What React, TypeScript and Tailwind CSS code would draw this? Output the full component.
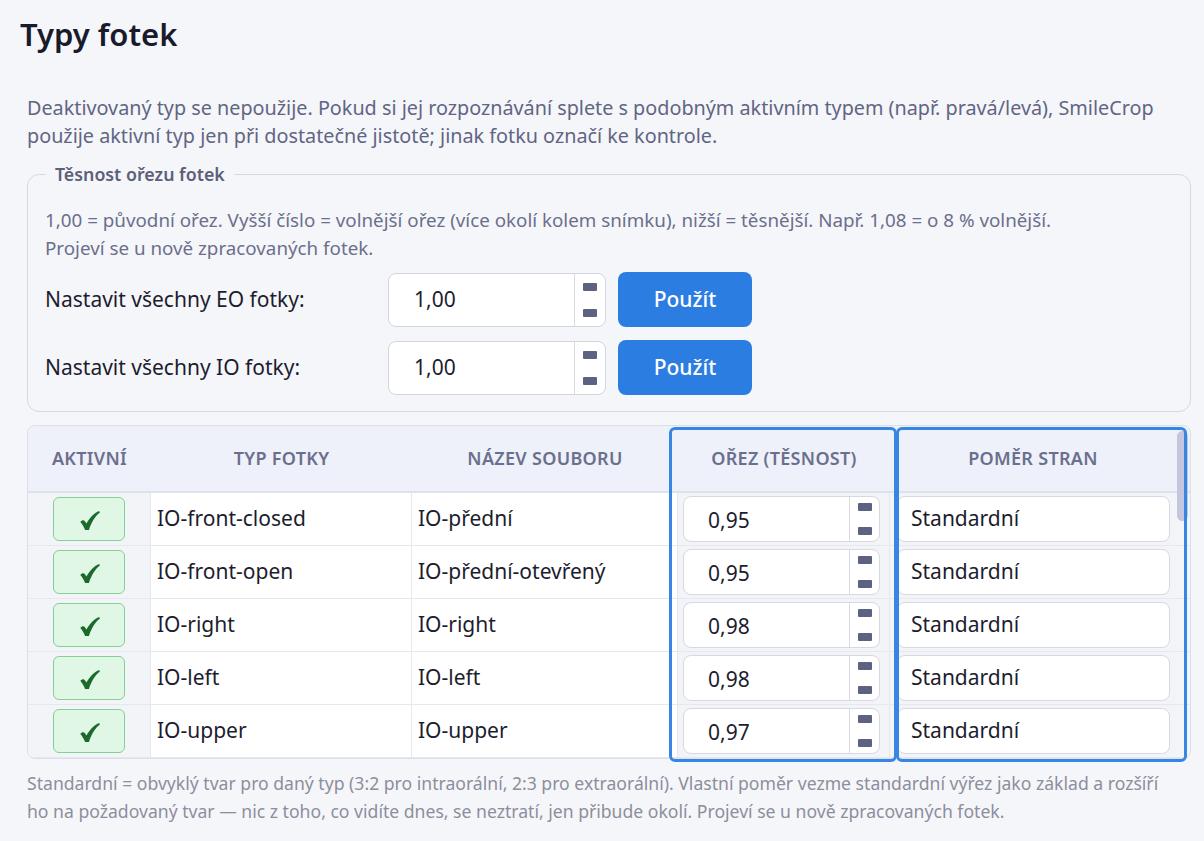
import React from "react";

const FONT = { fontFamily: '"Segoe UI", "Noto Sans", "Open Sans", sans-serif' };

interface PhotoType {
  code: string;
  fileName: string;
  crop: string;
}

const photoTypes: PhotoType[] = [
  { code: "IO-front-closed", fileName: "IO-přední", crop: "0,95" },
  { code: "IO-front-open", fileName: "IO-přední-otevřený", crop: "0,95" },
  { code: "IO-right", fileName: "IO-right", crop: "0,98" },
  { code: "IO-left", fileName: "IO-left", crop: "0,98" },
  { code: "IO-upper", fileName: "IO-upper", crop: "0,97" },
];

function CheckMark() {
  return (
    <svg width="20" height="19" viewBox="0 0 20 19" className="mt-[3px] ml-[2px]">
      <path
        d="M0.3 10.9 C1.8 9 3.8 8.6 4.9 10.2 L6.5 12.6 C9.4 7.4 13.2 2.8 19.1 0.1 L19.9 1.5 C14.8 5.6 11.6 11 8.9 18.9 L5.1 18.9 C3.7 15.4 2.1 12.9 0.3 10.9 Z"
        fill="#1b6a2c"
      />
    </svg>
  );
}

function Spinner({ className }: { className?: string }) {
  return (
    <div
      className={`flex flex-col items-center justify-between border-l border-[#d8dae5] ${className ?? ""}`}
    >
      <span className="block h-[8px] w-[14px] rounded-[1px] bg-[#5d6282]" />
      <span className="block h-[8px] w-[14px] rounded-[1px] bg-[#5d6282]" />
    </div>
  );
}

function BulkRow({ label }: { label: string }) {
  return (
    <div className="flex items-center">
      <span className="w-[343px] text-[21px] text-[#1c1d2e]">{label}</span>
      <div className="flex h-[54px] w-[218px] rounded-[8px] border border-[#d3d5e2] bg-white">
        <span className="flex flex-1 items-center pl-[25px] text-[21px] text-[#1c1d2e]">1,00</span>
        <Spinner className="w-[31px] py-[9px]" />
      </div>
      <button className="ml-[12px] h-[55px] w-[134px] rounded-[8px] bg-[#2b7de1] text-[21px] font-medium text-white">
        Použít
      </button>
    </div>
  );
}

const COLS = "grid grid-cols-[123px_261px_266px_212px_286px]";

export default function App() {
  return (
    <div className="min-h-screen bg-[#f5f6fa] pt-[13px] pr-[13px] pb-[20px] pl-[27px]" style={FONT}>
      <h1 className="-ml-[7px] text-[31px] leading-[42px] font-semibold text-[#191a2c]">Typy fotek</h1>

      <p className="mt-[39px] text-[19.8px] leading-[28px] text-[#616583]">
        Deaktivovaný typ se nepoužije. Pokud si jej rozpoznávání splete s podobným aktivním typem (např. pravá/levá),
        SmileCrop použije aktivní typ jen při dostatečné jistotě; jinak fotku označí ke kontrole.
      </p>

      <fieldset className="mt-[13px] rounded-[12px] border border-[#d6d8e4] px-[17px] pb-[16px]">
        <legend className="ml-[1px] px-[9px] text-[17.8px] leading-[22px] font-semibold text-[#5c6079]">
          Těsnost ořezu fotek
        </legend>
        <p className="mt-[21px] text-[18.8px] leading-[28px] text-[#6b6f8c]">
          1,00 = původní ořez. Vyšší číslo = volnější ořez (více okolí kolem snímku), nižší = těsnější. Např. 1,08 = o 8 %
          volnější.
          <br />
          Projeví se u nově zpracovaných fotek.
        </p>
        <div className="mt-[10px] flex flex-col gap-[13px]">
          <BulkRow label="Nastavit všechny EO fotky:" />
          <BulkRow label="Nastavit všechny IO fotky:" />
        </div>
      </fieldset>

      <div className="relative mt-[13px]">
        <div className="h-[334px] overflow-hidden rounded-[8px] border border-[#dcdee8] bg-[#f4f5f9]">
          <div
            className={`${COLS} h-[67px] items-center border-b-2 border-[#dfe1ec] bg-[#eef1f9] text-center text-[18px] font-semibold tracking-[0.3px] text-[#6b6f8e] uppercase`}
          >
            <span>Aktivní</span>
            <span>Typ fotky</span>
            <span>Název souboru</span>
            <span>Ořez (těsnost)</span>
            <span>Poměr stran</span>
          </div>
          {photoTypes.map((t) => (
            <div key={t.code} className={`${COLS} h-[53px] border-b border-[#e6e8f0] text-[21px] text-[#1c1d2e]`}>
              <div className="flex items-center justify-center border-r border-[#e6e8f0] bg-[#f3f4f8]">
                <button className="flex h-[44px] w-[72px] items-center justify-center rounded-[6px] border-[1.5px] border-[#84d093] bg-[#e1f7e6]">
                  <CheckMark />
                </button>
              </div>
              <div className="flex items-center border-r border-[#e6e8f0] bg-white pl-[6px]">{t.code}</div>
              <div className="flex items-center border-r border-[#e6e8f0] bg-white pl-[6px]">{t.fileName}</div>
              <div className="flex items-center border-r border-[#e6e8f0] bg-[#f3f4f8] pr-[9px] pl-[5px]">
                <div className="flex h-[46px] flex-1 rounded-[8px] border border-[#d6d8e4] bg-white">
                  <span className="flex flex-1 items-center pt-[4px] pl-[24px]">{t.crop}</span>
                  <Spinner className="w-[30px] py-[6px]" />
                </div>
              </div>
              <div className="flex items-center bg-[#f3f4f8] pr-[6px] pl-[7px]">
                <div className="flex h-[46px] flex-1 items-center rounded-[8px] border border-[#d6d8e4] bg-white pl-[13px]">
                  Standardní
                </div>
              </div>
            </div>
          ))}
        </div>

        {/* scrollbar thumb */}
        <div className="pointer-events-none absolute top-[6px] left-[1150px] h-[90px] w-[11px] rounded-full bg-[#c3c6dd]" />

        {/* highlight overlays */}
        <div className="pointer-events-none absolute top-[2px] left-[642px] h-[335px] w-[228px] rounded-[6px] border-[3px] border-[#3787e2]" />
        <div className="pointer-events-none absolute top-[2px] left-[869px] h-[335px] w-[291px] rounded-[6px] border-[3px] border-[#3787e2]" />
      </div>

      <p className="mt-[10px] pr-[28px] text-[17.6px] leading-[28px] text-[#8c8e9c]">
        Standardní = obvyklý tvar pro daný typ (3:2 pro intraorální, 2:3 pro extraorální). Vlastní poměr vezme standardní
        výřez jako základ a rozšíří ho na požadovaný tvar — nic z toho, co vidíte dnes, se neztratí, jen přibude okolí.
        Projeví se u nově zpracovaných fotek.
      </p>
    </div>
  );
}
